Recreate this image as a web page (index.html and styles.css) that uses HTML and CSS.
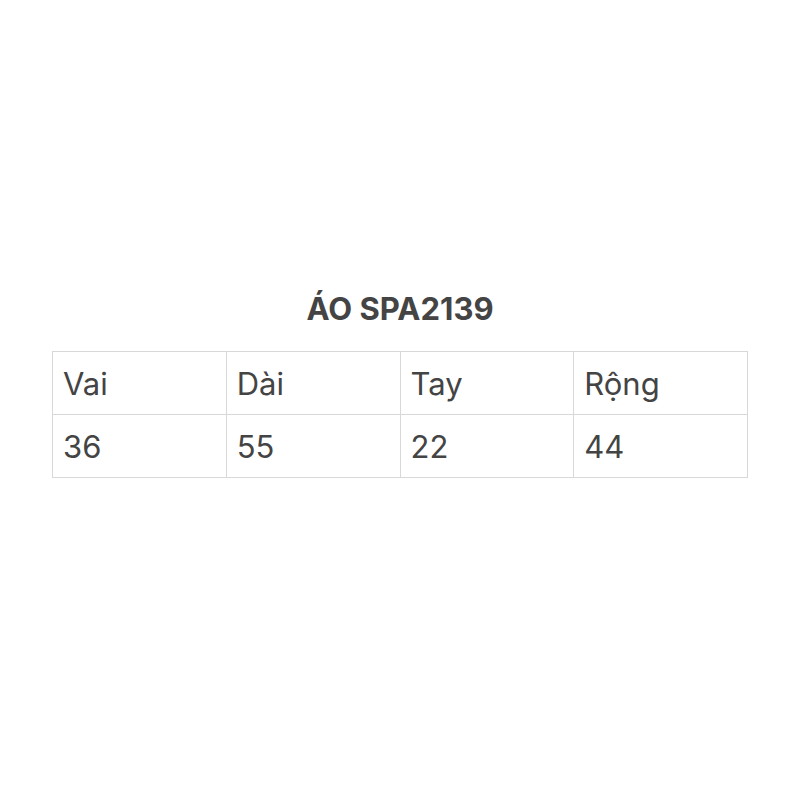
FILE: index.html
```html
<!DOCTYPE html>
<html lang="vi">
<head>
<meta charset="utf-8">
<title>ÁO SPA2139</title>
<link rel="stylesheet" href="styles.css">
</head>
<body>
<main class="page">
  <h1 class="title">ÁO SPA2139</h1>
  <table class="sizes">
    <tr><td>Vai</td><td>Dài</td><td>Tay</td><td>Rộng</td></tr>
    <tr><td>36</td><td>55</td><td>22</td><td>44</td></tr>
  </table>
</main>
</body>
</html>
```

FILE: styles.css
```css
html, body {
  margin: 0;
  padding: 0;
  background: #ffffff;
}
.page {
  width: 800px;
  height: 800px;
  box-sizing: border-box;
  padding: 289px 52px 0;
  display: flex;
  flex-direction: column;
  align-items: center;
  font-family: Inter, "Noto Sans", "Liberation Sans", sans-serif;
  color: #444444;
}
.title {
  margin: 0 0 22px;
  font-size: 31px;
  line-height: 40px;
  font-weight: 700;
  color: #444444;
}
.sizes {
  width: 696px;
  border-collapse: collapse;
  table-layout: fixed;
}
.sizes td {
  border: 1px solid #d8d8d8;
  height: 62px;
  padding: 0 10px;
  font-size: 31px;
  font-weight: 400;
  color: #444444;
  vertical-align: middle;
}
```
